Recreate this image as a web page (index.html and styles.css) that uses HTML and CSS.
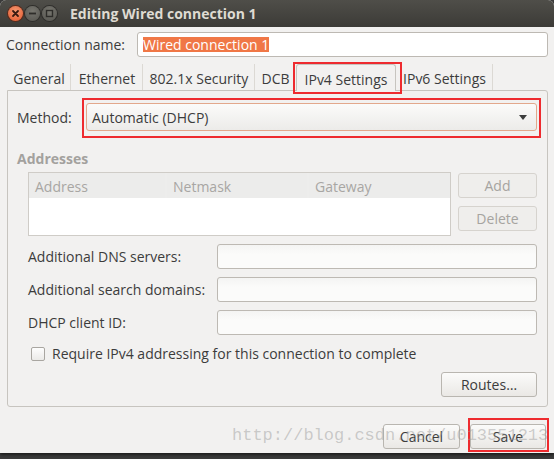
FILE: index.html
```html
<!DOCTYPE html>
<html>
<head>
<meta charset="utf-8">
<link rel="stylesheet" href="styles.css">
</head>
<body>
<div class="window">
  <div class="titlebar">
    <div class="wbtns">
      <span class="wb close"><svg width="15" height="15" viewBox="0 0 15 15"><path d="M5 5L10 10M10 5L5 10" stroke="#3a1a10" stroke-width="1.8" stroke-linecap="round"/></svg></span>
      <span class="wb"><svg width="15" height="15" viewBox="0 0 15 15"><path d="M4 7.5H11" stroke="#2e2d2a" stroke-width="1.8"/></svg></span>
      <span class="wb"><svg width="15" height="15" viewBox="0 0 15 15"><rect x="4.5" y="4.5" width="6" height="6" fill="none" stroke="#2e2d2a" stroke-width="1.4"/></svg></span>
    </div>
    <div class="title">Editing Wired connection 1</div>
  </div>

  <div class="namerow">
    <span class="namelabel">Connection name:</span>
    <div class="entry nameentry"><span class="sel">Wired connection 1</span></div>
  </div>

  <div class="tabs">
    <div class="tab t1">General</div>
    <div class="tab t2">Ethernet</div>
    <div class="tab t3">802.1x Security</div>
    <div class="tab t4">DCB</div>
    <div class="tab t5 active">IPv4 Settings</div>
    <div class="tab t6">IPv6 Settings</div>
  </div>

  <div class="panel">
    <div class="methodrow">
      <span class="methodlabel">Method:</span>
      <div class="combo"><span>Automatic (DHCP)</span><span class="arrow"></span></div>
    </div>

    <div class="heading">Addresses</div>
    <div class="addrblock">
      <div class="table">
        <div class="thead">
          <div class="th c1">Address</div>
          <div class="th c2">Netmask</div>
          <div class="th c3">Gateway</div>
        </div>
        <div class="tbody"></div>
      </div>
      <div class="sidebtns">
        <div class="btn disabled">Add</div>
        <div class="btn disabled">Delete</div>
      </div>
    </div>

    <div class="form">
      <span class="flabel">Additional DNS servers:</span><div class="entry"></div>
      <span class="flabel">Additional search domains:</span><div class="entry"></div>
      <span class="flabel">DHCP client ID:</span><div class="entry"></div>
    </div>

    <div class="checkrow">
      <span class="checkbox"></span>
      <span>Require IPv4 addressing for this connection to complete</span>
    </div>

    <div class="routesrow">
      <div class="btn routes">Routes…</div>
    </div>
  </div>

  <div class="actions">
    <div class="btn cancel">Cancel</div>
    <div class="btn save">Save</div>
  </div>

  <div class="watermark">http://blog.csdn.net/u013551213</div>
</div>
</body>
</html>
```
FILE: styles.css
```css
html, body {
  margin: 0;
  padding: 0;
}
body {
  width: 554px;
  height: 459px;
  overflow: hidden;
  background: #3b3b3b;
  font-family: "Open Sans", "DejaVu Sans", sans-serif;
  font-size: 14px;
  color: #3c3c3c;
}
.window {
  position: relative;
  width: 554px;
  height: 453px;
  background: #f2f1f0;
  border-radius: 6px 6px 0 0;
  display: flex;
  flex-direction: column;
  box-shadow: 0 2px 3px rgba(0,0,0,0.5);
}
.titlebar {
  height: 27px;
  flex: none;
  background: linear-gradient(#4f4e49, #3c3b37);
  border-radius: 6px 6px 0 0;
  display: flex;
  align-items: center;
  padding-left: 8px;
}
.wbtns {
  display: flex;
  gap: 2px;
}
.wb {
  width: 15px;
  height: 15px;
  border-radius: 50%;
  background: radial-gradient(circle at 50% 35%, #77766f, #55544f);
  box-shadow: 0 0 0 1px #2f2e2b;
  display: flex;
}
.wb.close {
  background: radial-gradient(circle at 50% 35%, #f69a73, #e4552a);
  box-shadow: 0 0 0 1px #5a2a1a;
}
.title {
  margin-left: 13px;
  color: #dfdbd2;
  font-weight: bold;
  font-size: 14px;
}

.namerow {
  display: flex;
  align-items: center;
  padding: 5px 6px 0 6px;
  flex: none;
}
.namelabel {
  width: 131px;
  flex: none;
}
.entry {
  height: 23px;
  border: 1px solid #bdb9b3;
  border-radius: 3px;
  background: linear-gradient(#f4f4f3, #fbfbfa 40%, #fbfbfa);
  display: flex;
  align-items: center;
}
.nameentry {
  flex: 1;
  padding-left: 5px;
  background: #fff;
  height: 23px;
}
.sel {
  background: #f07746;
  color: #fff;
  line-height: 15px;
}

.tabs {
  display: flex;
  margin: 7px 0 0 7px;
  height: 26px;
  flex: none;
}
.tab {
  display: flex;
  align-items: center;
  justify-content: center;
  padding-top: 3px;
  box-sizing: border-box;
  position: relative;
}
.tab::before {
  content: "";
  position: absolute;
  right: 0;
  top: 0;
  bottom: 0;
  width: 1px;
  background: #dcd9d4;
}
.t1 { width: 64px; }
.t2 { width: 72px; }
.t3 { width: 112px; }
.t4 { width: 41px; }
.t4::before, .t5::before { display: none; }
.t5 { width: 100px; }
.t6 { width: 97px; }
.tab.active {
  border: 1px solid #c7c4bf;
  border-bottom: none;
  border-radius: 3px 3px 0 0;
  background: #f2f1f0;
  margin-bottom: -1px;
  padding-top: 2px;
  z-index: 2;
}
.tab.active::after {
  content: "";
  position: absolute;
  left: -4px;
  right: -7px;
  top: -3px;
  bottom: -3px;
  border: 2px solid #ee2b2f;
}

.panel {
  margin: 0 6px 0 7px;
  height: 317px;
  box-sizing: border-box;
  flex: none;
  border: 1px solid #c7c4bf;
  border-radius: 0 3px 3px 3px;
  padding: 12px 10px 0 9px;
  position: relative;
}
.methodrow {
  display: flex;
  align-items: center;
}
.methodlabel {
  width: 69px;
  flex: none;
}
.combo {
  flex: 1;
  height: 26px;
  border: 1px solid #e2a88c;
  border-radius: 3px;
  background: linear-gradient(#fbfbfa, #ecebe9);
  display: flex;
  align-items: center;
  justify-content: space-between;
  padding: 0 9px 0 5px;
  position: relative;
}
.combo::after {
  content: "";
  position: absolute;
  left: -5px;
  right: -5px;
  top: -6px;
  bottom: -8px;
  border: 2px solid #ee2b2f;
}
.arrow {
  width: 0;
  height: 0;
  border-left: 4px solid transparent;
  border-right: 4px solid transparent;
  border-top: 5px solid #3c3c3c;
}
.heading {
  margin-top: 19px;
  font-weight: bold;
  color: #a3a19e;
  height: 18px;
  line-height: 18px;
}
.addrblock {
  display: flex;
  margin: 4px 0 0 11px;
  gap: 7px;
}
.table {
  width: 421px;
  height: 62px;
  border: 1px solid #cfccc7;
  background: #fff;
  display: flex;
  flex-direction: column;
}
.thead {
  display: flex;
  height: 25px;
  background: #ededec;
  gap: 2px;
}
.th {
  display: flex;
  align-items: center;
  padding-left: 6px;
  padding-top: 2px;
  color: #a8a6a3;
  background: #ececeb;
  box-sizing: border-box;
}
.c1 { width: 136px; }
.c2 { width: 140px; }
.c3 { flex: 1; }
.sidebtns {
  display: flex;
  flex-direction: column;
  gap: 8px;
  width: 79px;
  padding-top: 1px;
}
.btn {
  height: 23px;
  border: 1px solid #b9b6b0;
  border-radius: 3px;
  background: linear-gradient(#fbfbfa, #eae8e5);
  display: flex;
  align-items: center;
  justify-content: center;
  box-sizing: content-box;
}
.btn.disabled {
  color: #a6a4a0;
  border-color: #d6d3ce;
  background: #efeeec;
}
.form {
  display: grid;
  grid-template-columns: 189px 1fr;
  row-gap: 8px;
  align-items: center;
  margin: 8px 0 0 11px;
}
.form .entry {
  height: 23px;
}
.checkrow {
  display: flex;
  align-items: center;
  margin: 9px 0 0 14px;
  gap: 7px;
}
.checkbox {
  width: 12px;
  height: 12px;
  border: 1px solid #a9a6a1;
  border-radius: 2px;
  background: linear-gradient(#fdfdfd, #ebeae8);
}
.routesrow {
  display: flex;
  justify-content: flex-end;
  margin-top: 9px;
}
.routes {
  width: 94px;
}
.actions {
  display: flex;
  justify-content: flex-end;
  gap: 10px;
  margin: 17px 8px 0 0;
  flex: none;
}
.cancel { width: 75px; }
.save { width: 74px; position: relative; }
.save::after {
  content: "";
  position: absolute;
  left: -3px;
  right: -4px;
  top: -7px;
  bottom: -4px;
  border: 2px solid #ee2b2f;
}
.watermark {
  position: absolute;
  left: 232px;
  top: 426px;
  font-family: "Liberation Mono", "DejaVu Sans Mono", monospace;
  font-size: 17px;
  color: rgba(150, 150, 150, 0.45);
  pointer-events: none;
  white-space: nowrap;
}
```
